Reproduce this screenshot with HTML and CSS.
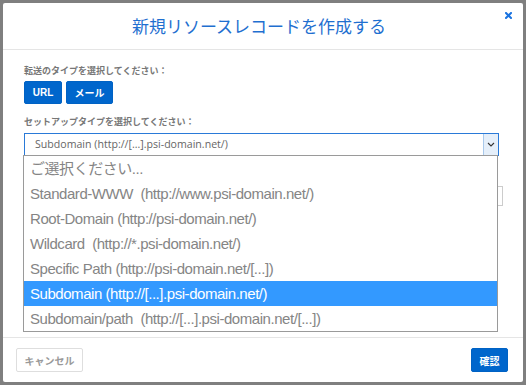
FILE: index.html
```html
<!DOCTYPE html>
<html lang="ja">
<head>
    <meta charset="UTF-8">
    <meta name="viewport" content="width=device-width, initial-scale=1.0">
    <title>新規リソースレコードを作成する</title>
    <link rel="stylesheet" href="styles.css">
</head>
<body>
    <div class="modal">
        <div class="modal-header">
            <h1 class="modal-title">新規リソースレコードを作成する</h1>
            <button class="close" aria-label="閉じる">
                <svg width="7" height="7" viewBox="0 0 7 7"><path d="M1 1 L6 6 M6 1 L1 6" stroke="#1a73e0" stroke-width="2" stroke-linecap="square"/></svg>
            </button>
        </div>
        <div class="modal-body">
            <div class="field-label">転送のタイプを選択してください：</div>
            <div class="type-buttons">
                <button class="btn btn-primary btn-url">URL</button>
                <button class="btn btn-primary btn-mail">メール</button>
            </div>
            <div class="field-label second">セットアップタイプを選択してください：</div>
            <div class="select-wrap">
                <div class="select-box">
                    <div class="select-value">Subdomain (http://[...].psi-domain.net/)</div>
                    <div class="select-arrow">
                        <svg width="8" height="5" viewBox="0 0 8 5"><path d="M1 1 L4 4 L7 1" fill="none" stroke="#333" stroke-width="1.1"/></svg>
                    </div>
                </div>
                <ul class="dropdown">
                    <li>ご選択ください...</li>
                    <li>Standard-WWW&nbsp; (http://www.psi-domain.net/)</li>
                    <li>Root-Domain (http://psi-domain.net/)</li>
                    <li>Wildcard&nbsp; (http://*.psi-domain.net/)</li>
                    <li>Specific Path (http://psi-domain.net/[...])</li>
                    <li class="active">Subdomain (http://[...].psi-domain.net/)</li>
                    <li>Subdomain/path&nbsp; (http://[...].psi-domain.net/[...])</li>
                </ul>
            </div>
            <div class="hidden-field"></div>
        </div>
        <div class="modal-footer">
            <button class="btn btn-cancel">キャンセル</button>
            <button class="btn btn-primary btn-ok">確認</button>
        </div>
    </div>
</body>
</html>
```

FILE: styles.css
```css
body {
    margin: 0;
    background: #7f7f7f;
    font-family: "Noto Sans CJK JP", "Liberation Sans", sans-serif;
    height: 385px;
    overflow: hidden;
}
.modal {
    margin: 3px;
    width: 520px;
    height: 379px;
    background: #fff;
    border-radius: 2px;
    display: flex;
    flex-direction: column;
}
.modal-header {
    position: relative;
    height: 46px;
    border-bottom: 1px solid #e5e5e5;
    display: flex;
    align-items: center;
    justify-content: center;
}
.modal-title {
    margin: 0 0 0 -8px;
    font-size: 17px;
    font-weight: 400;
    color: #1f6fd0;
    line-height: 20px;
}
.close {
    position: absolute;
    top: 9px;
    right: 11px;
    padding: 0;
    border: none;
    background: none;
    line-height: 0;
}
.modal-body {
    flex: 1;
    padding: 15px 21px 0;
}
.field-label {
    font-size: 9px;
    font-weight: 700;
    color: #777;
    line-height: 12px;
}
.field-label.second {
    margin-top: 12px;
}
.type-buttons {
    display: flex;
    gap: 4px;
    margin-top: 4px;
}
.btn {
    font-family: "Liberation Sans", "Noto Sans CJK JP", sans-serif;
    font-size: 10px;
    font-weight: 700;
    border-radius: 2px;
    padding: 0;
    cursor: pointer;
}
.btn-primary {
    background: #0066cc;
    border: 1px solid #0062c4;
    color: #fff;
    height: 23px;
}
.btn-url {
    width: 38px;
}
.btn-mail {
    width: 47px;
}
.select-wrap {
    position: relative;
    margin-top: 5px;
    width: 475px;
}
.select-box {
    height: 21px;
    border: 1px solid #2a7ad8;
    display: grid;
    grid-template-columns: 1fr 15px;
}
.select-value {
    padding: 0 0 0 10px;
    line-height: 21px;
    font-family: "Open Sans", Lato, sans-serif;
    font-size: 10.6px;
    color: #666;
}
.select-arrow {
    background: #e5effa;
    border-left: 1px solid #a9c9ec;
    display: flex;
    align-items: center;
    justify-content: center;
}
.dropdown {
    position: absolute;
    top: 22px;
    left: -1px;
    width: 473px;
    margin: 0;
    padding: 0;
    list-style: none;
    background: #fff;
    border: 1px solid #9a9a9a;
    z-index: 2;
}
.dropdown li {
    height: 25px;
    line-height: 25px;
    padding-left: 6px;
    font-family: "Liberation Sans", "Noto Sans CJK JP", sans-serif;
    font-size: 15px;
    letter-spacing: -0.45px;
    color: #858585;
    white-space: nowrap;
}
.dropdown li.active {
    background: #3399ff;
    color: #fff;
}
.hidden-field {
    margin-top: 30px;
    height: 18px;
    width: 477px;
    border: 1px solid #ccc;
}
.modal-footer {
    border-top: 1px solid #e5e5e5;
    padding: 10px 15px 0 13px;
    height: 34px;
    display: flex;
    justify-content: space-between;
    align-items: flex-start;
}
.btn-cancel {
    width: 67px;
    height: 24px;
    background: #fff;
    border: 1px solid #dedede;
    color: #999;
}
.btn-ok {
    width: 37px;
    height: 24px;
}
```
